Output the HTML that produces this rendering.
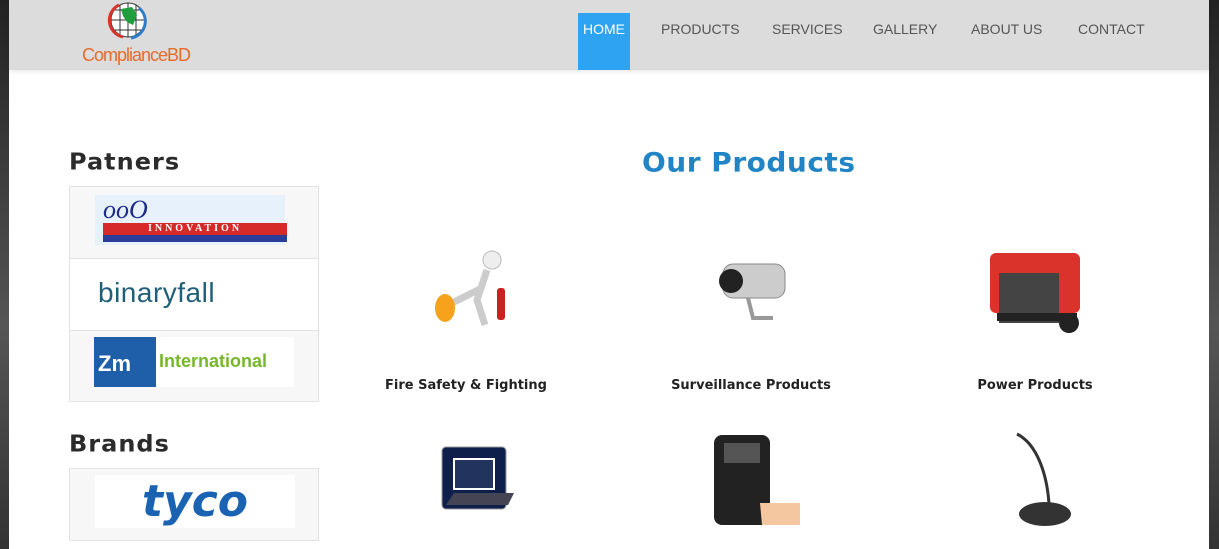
<!DOCTYPE html>
<html><head><meta charset="utf-8"><style>
*{margin:0;padding:0;box-sizing:border-box}
body{width:1219px;height:549px;overflow:hidden;background:linear-gradient(#222,#555 60%,#333);font-family:"Liberation Sans",sans-serif;position:relative}
.page{position:absolute;left:9px;top:0;width:1200px;height:549px;background:#fff}
.nav{position:absolute;left:0;top:0;width:1200px;height:70px;background:#dcdcdc;box-shadow:0 2px 4px rgba(0,0,0,.08)}
.nav a{position:absolute;top:21px;font-size:14px;color:#555;text-decoration:none}
.home{position:absolute;left:569px;top:13px;width:52px;height:57px;background:#2ea3f2;color:#fff;font-size:14px;padding-top:8px;text-align:center}
.logo{position:absolute;left:73px;top:45px;color:#e86a2c;font-size:18px;letter-spacing:-1px}
h2{position:absolute;font-family:"DejaVu Sans",sans-serif;font-weight:900;color:#2b2b2b;font-size:24px;letter-spacing:1px;transform:scaleY(.95)}
.box{position:absolute;left:60px;width:250px;background:#f7f7f7;border:1px solid #e2e2e2}
.cap{position:absolute;font-family:"DejaVu Sans",sans-serif;font-weight:bold;font-size:13px;color:#222;text-align:center;width:250px}
</style></head><body>
<div class="page">
<div class="nav">
<svg style="position:absolute;left:97px;top:0" width="44" height="42" viewBox="0 0 42 42"><circle cx="21" cy="20" r="17" fill="#fff" stroke="#333" stroke-width="1"/><path d="M21 3v34M4 20h34M8 10h26M8 30h26M13 5v30M29 5v30" stroke="#333" stroke-width="1"/><path d="M14 9l11 -2 5 8-4 10-6-3-4-6z" fill="#1e9e3c"/><path d="M12 5A17 17 0 0 0 16 37" stroke="#d9342b" stroke-width="3" fill="none"/><path d="M32 8A17 17 0 0 1 24 38" stroke="#2d7cc7" stroke-width="3" fill="none"/></svg>
<div class="logo">ComplianceBD</div>
<div class="home">HOME</div>
<a style="left:652px">PRODUCTS</a><a style="left:763px">SERVICES</a><a style="left:864px">GALLERY</a><a style="left:962px">ABOUT US</a><a style="left:1069px">CONTACT</a>
</div>
<h2 style="left:60px;top:148px">Patners</h2>
<h2 style="left:633px;top:146px;color:#2185c5;font-size:28px;letter-spacing:.5px">Our Products</h2>
<div class="box" style="top:186px;height:73px"><div style="position:absolute;left:25px;top:8px;width:190px;height:50px;background:#e6f1fb"><div style="position:absolute;left:8px;top:0;font:italic 26px 'Liberation Serif';color:#1d2a8a">ooO</div><div style="position:absolute;left:8px;top:28px;width:184px;height:12px;background:#d62a2a;color:#fff;font:bold 10px 'Liberation Serif';letter-spacing:3px;text-align:center">INNOVATION</div><div style="position:absolute;left:8px;top:40px;width:184px;height:7px;background:#2b3c9a"></div></div></div>
<div class="box" style="top:258px;height:73px;background:#fff"><div style="position:absolute;left:28px;top:18px;font-size:28px;color:#1f5f7a;letter-spacing:.5px">binaryfall</div></div>
<div class="box" style="top:330px;height:72px"><div style="position:absolute;left:24px;top:6px;width:200px;height:50px;background:#fff"><div style="width:62px;height:50px;background:#1f5ea8;color:#fff;font:bold 22px sans-serif;padding:14px 4px">Zm</div><div style="position:absolute;left:65px;top:14px;font:bold 18px sans-serif;color:#76b82a">International</div></div></div>
<h2 style="left:60px;top:430px">Brands</h2>
<div class="box" style="top:468px;height:73px"><div style="position:absolute;left:25px;top:6px;width:200px;height:53px;background:#fff;font:italic 900 44px 'DejaVu Sans',sans-serif;color:#1a63b3;text-align:center;line-height:53px">tyco</div></div>
<svg style="position:absolute;left:418px;top:248px" width="80" height="90"><circle cx="65" cy="12" r="9" fill="#eee" stroke="#bbb"/><path d="M60 22l-10 30 8 25M55 40l-30 15" stroke="#ccc" stroke-width="7" fill="none"/><rect x="70" y="40" width="8" height="32" rx="3" fill="#c92222"/><ellipse cx="18" cy="60" rx="10" ry="14" fill="#f7a21b"/></svg>
<div class="cap" style="left:332px;top:378px">Fire Safety &amp; Fighting</div>
<svg style="position:absolute;left:704px;top:256px" width="80" height="70"><rect x="10" y="8" width="62" height="34" rx="10" fill="#ccc" stroke="#888"/><circle cx="18" cy="25" r="12" fill="#222"/><path d="M35 42l5 20h20" stroke="#999" stroke-width="4" fill="none"/></svg>
<div class="cap" style="left:617px;top:378px">Surveillance Products</div>
<svg style="position:absolute;left:978px;top:243px" width="98" height="98"><rect x="3" y="10" width="90" height="60" rx="6" fill="#d9332b"/><rect x="12" y="30" width="60" height="50" fill="#444"/><rect x="10" y="70" width="80" height="8" fill="#222"/><circle cx="82" cy="80" r="10" fill="#222"/></svg>
<div class="cap" style="left:901px;top:378px">Power Products</div>
<svg style="position:absolute;left:423px;top:445px" width="90" height="70"><rect x="10" y="2" width="64" height="62" rx="4" fill="#0d1f4a" stroke="#999"/><rect x="22" y="14" width="40" height="30" fill="#22335e" stroke="#fff" stroke-width="2"/><path d="M22 48h60l-6 12H14z" fill="#445"/></svg>
<svg style="position:absolute;left:703px;top:433px" width="100" height="96"><rect x="2" y="2" width="56" height="90" rx="8" fill="#222"/><rect x="12" y="10" width="36" height="20" fill="#555"/><path d="M48 70h40v22H50z" fill="#f4c7a1"/></svg>
<svg style="position:absolute;left:998px;top:430px" width="70" height="98"><path d="M10 4c20 10 30 40 32 70" stroke="#333" stroke-width="3" fill="none"/><ellipse cx="38" cy="84" rx="26" ry="12" fill="#333"/></svg>
</div>
</body></html>
